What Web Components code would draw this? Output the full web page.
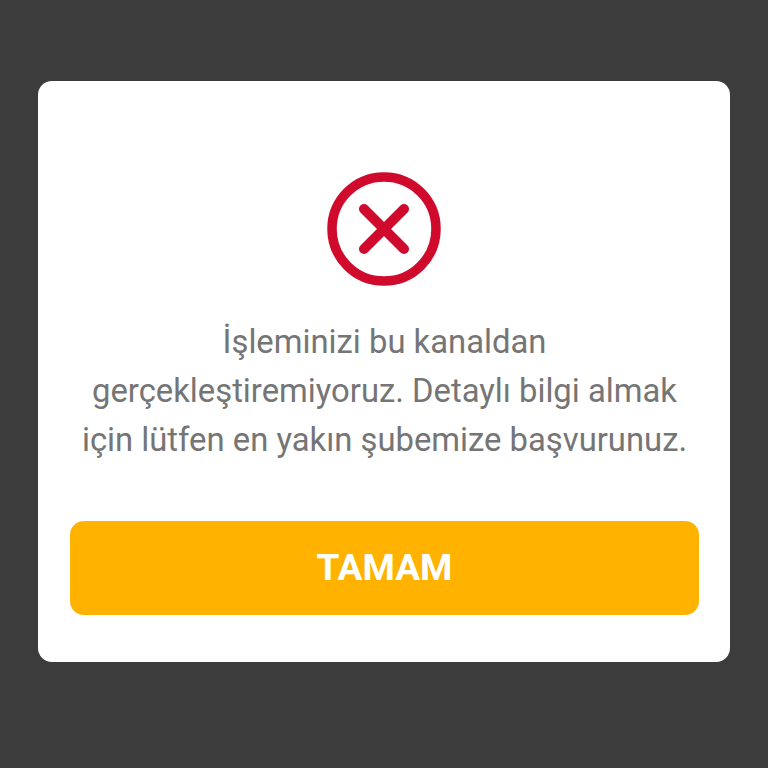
<!DOCTYPE html>
<html lang="tr">
<head>
<meta charset="utf-8">
<style>
    html, body { margin: 0; height: 100%; }
    body { background: #3c3c3c; font-family: Roboto, "Liberation Sans", sans-serif; }
</style>
</head>
<body>
<alert-page>
    <alert-dialog>
        <error-icon slot="icon"></error-icon>
        İşleminizi bu kanaldan gerçekleştiremiyoruz. Detaylı bilgi almak için lütfen en yakın şubemize başvurunuz.
        <action-button slot="action">TAMAM</action-button>
    </alert-dialog>
</alert-page>
<script>
class AlertPage extends HTMLElement {
    constructor() {
        super();
        this.attachShadow({ mode: 'open' });
        this.shadowRoot.innerHTML = `
            <style>
                :host {
                    display: flex;
                    box-sizing: border-box;
                    height: 768px;
                    padding: 81px 38px 106px;
                }
            </style>
            <slot></slot>
        `;
    }
}

class AlertDialog extends HTMLElement {
    constructor() {
        super();
        this.attachShadow({ mode: 'open' });
        this.shadowRoot.innerHTML = `
            <style>
                :host {
                    display: flex;
                    flex-direction: column;
                    align-items: center;
                    box-sizing: border-box;
                    width: 692px;
                    height: 581px;
                    padding: 91px 31px 47px 32px;
                    background: #fff;
                    border-radius: 14px;
                }

                .message {
                    margin: 32px 0 0;
                    width: 629px;
                    font-size: 32.8px;
                    line-height: 49px;
                    color: #757575;
                    text-align: center;
                }

                .action {
                    margin-top: auto;
                    width: 100%;
                }
            </style>
            <slot name="icon"></slot>
            <p class="message"><slot></slot></p>
            <div class="action"><slot name="action"></slot></div>
        `;
    }
}

class ErrorIcon extends HTMLElement {
    constructor() {
        super();
        this.attachShadow({ mode: 'open' });
        this.shadowRoot.innerHTML = `
            <style>
                :host { display: block; width: 114px; height: 114px; margin-left: -1px; }
                svg { display: block; }
            </style>
            <svg width="114" height="114" viewBox="0 0 114 114" fill="none" stroke="#cf0a2c" aria-hidden="true">
                <circle cx="57" cy="57" r="52" stroke-width="9.5"/>
                <path d="M37 37L77 77M77 37L37 77" stroke-width="10" stroke-linecap="round"/>
            </svg>
        `;
    }
}

class ActionButton extends HTMLElement {
    constructor() {
        super();
        this.attachShadow({ mode: 'open' });
        this.shadowRoot.innerHTML = `
            <style>
                :host {
                    display: flex;
                    align-items: center;
                    justify-content: center;
                    box-sizing: border-box;
                    height: 94px;
                    padding-bottom: 2px;
                    background: #ffb300;
                    border-radius: 14px;
                    color: #fff;
                    font-size: 37px;
                    font-weight: 700;
                }
            </style>
            <slot></slot>
        `;
    }
}

customElements.define('alert-page', AlertPage);
customElements.define('alert-dialog', AlertDialog);
customElements.define('error-icon', ErrorIcon);
customElements.define('action-button', ActionButton);
</script>
</body>
</html>
